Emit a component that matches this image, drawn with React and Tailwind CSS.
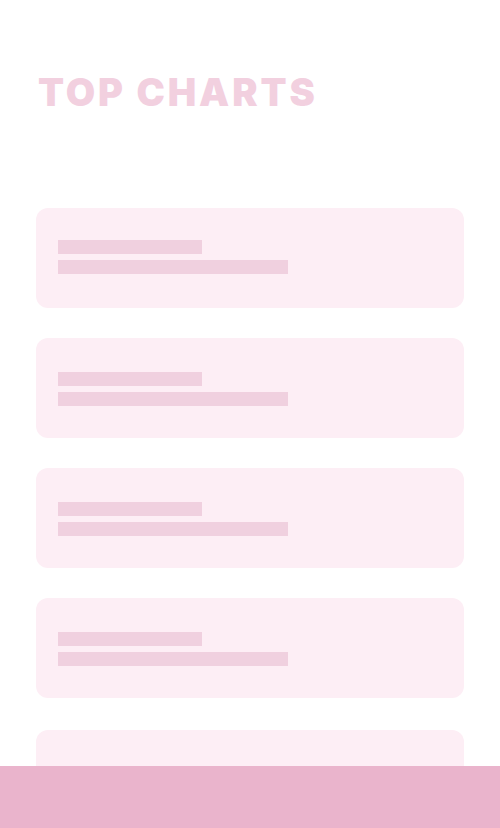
import React from 'react';

const rows = [0, 1, 2, 3, 4];

export default function App() {
  return (
    <div className="min-h-[828px] bg-white font-['Inter',sans-serif]">
      <div className="px-9 pt-[68px] pb-24">
        <h1 className="pl-0.5 text-[38px] leading-[48px] font-black tracking-[2.9px] text-[#f2d0df]">
          TOP CHARTS
        </h1>

        <div className="mt-[92px] flex flex-col gap-[30px]">
          {rows.map((i) => (
            <div
              key={i}
              className={`h-[100px] rounded-xl bg-[#fdeef5] px-[22px] ${i === 0 ? 'pt-[32px]' : i === 4 ? 'pt-[38px]' : 'pt-[34px]'} ${i === 4 ? 'mt-0.5' : ''}`}
            >
              <div className="h-[14px] w-[144px] bg-[#f0d0df]" />
              <div className="mt-[6px] h-[14px] w-[230px] bg-[#f0d0df]" />
            </div>
          ))}
        </div>
      </div>

      <div className="fixed bottom-0 left-0 right-0 h-[62px] bg-[#eab4cc]" />
    </div>
  );
}
